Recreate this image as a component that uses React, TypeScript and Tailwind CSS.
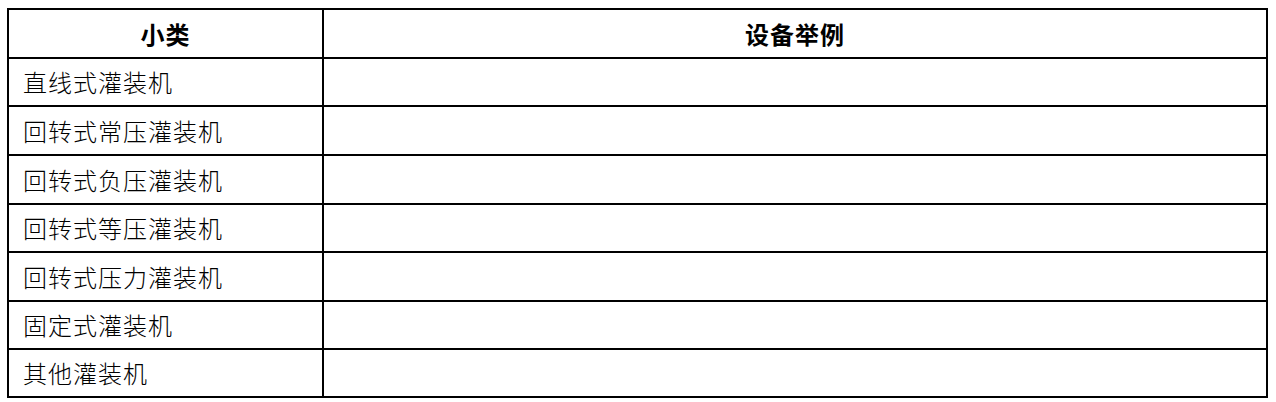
import React from "react";

const rows: { label: string; h: string }[] = [
  { label: "直线式灌装机", h: "h-[48px]" },
  { label: "回转式常压灌装机", h: "h-[49px]" },
  { label: "回转式负压灌装机", h: "h-[49px]" },
  { label: "回转式等压灌装机", h: "h-[48px]" },
  { label: "回转式压力灌装机", h: "h-[49px]" },
  { label: "固定式灌装机", h: "h-[48px]" },
  { label: "其他灌装机", h: "h-[46px]" },
];

export default function App() {
  return (
    <div
      className="w-[1276px] h-[402px] bg-white pt-[8px] pl-[7px]"
      style={{ fontFamily: '"Noto Sans CJK SC", "Noto Sans", sans-serif' }}
    >
      <div className="w-[1261px] border-2 border-black flex flex-col text-black">
        <div className="h-[49px] border-b-2 border-black flex">
          <div className="w-[315px] border-r-2 border-black flex items-center justify-center text-[24px] tracking-[1px] font-bold leading-none">
            小类
          </div>
          <div className="flex-1 flex items-center justify-center text-[24px] tracking-[1px] font-bold leading-none">
            设备举例
          </div>
        </div>
        {rows.map((r, i) => (
          <div
            key={r.label}
            className={`${r.h} flex ${i < rows.length - 1 ? "border-b-2 border-black" : ""}`}
          >
            <div className="w-[315px] border-r-2 border-black flex items-center pl-[14px] text-[24px] tracking-[1px] font-light leading-none">
              {r.label}
            </div>
            <div className="flex-1" />
          </div>
        ))}
      </div>
    </div>
  );
}
